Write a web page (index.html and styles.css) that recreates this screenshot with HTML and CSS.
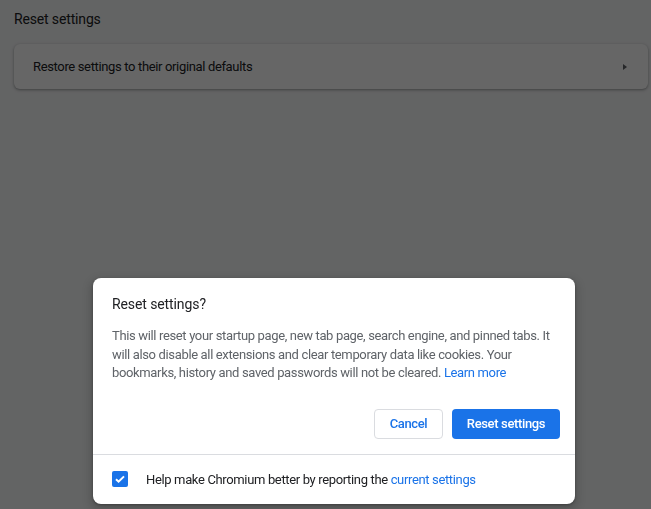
FILE: index.html
```html
<!DOCTYPE html>
<html>
<head>
<meta charset="utf-8">
<link rel="stylesheet" href="styles.css">
</head>
<body>
<main class="page">
  <h2 class="section-title">Reset settings</h2>
  <div class="card">
    <div class="row">
      <span class="row-label">Restore settings to their original defaults</span>
      <span class="subpage-arrow"></span>
    </div>
  </div>
</main>
<div class="scrim"></div>
<div class="dialog" role="dialog">
  <div class="dialog-title">Reset settings?</div>
  <div class="dialog-body">This will reset your startup page, new tab page, search engine, and pinned tabs. It will also disable all extensions and clear temporary data like cookies. Your bookmarks, history and saved passwords will not be cleared. <a class="link" href="#">Learn more</a></div>
  <div class="dialog-buttons">
    <button class="btn btn-cancel">Cancel</button>
    <button class="btn btn-action">Reset settings</button>
  </div>
  <div class="dialog-footer">
    <span class="checkbox"><svg viewBox="0 0 16 16" width="16" height="16"><path d="M4 8.2l2.6 2.5L12 5.4" fill="none" stroke="#fff" stroke-width="2"/></svg></span>
    <span class="footer-text">Help make Chromium better by reporting the <a class="link" href="#">current settings</a></span>
  </div>
</div>
</body>
</html>
```

FILE: styles.css
```css
html, body {
  margin: 0;
  padding: 0;
  height: 100%;
}
body {
  background: #f8f9fa;
  font-family: Roboto, "Liberation Sans", Arial, sans-serif;
  color: #202124;
  overflow: hidden;
  letter-spacing: -0.35px;
}
.page {
  padding: 9px 0 0 14px;
}
.section-title {
  margin: 0;
  font-size: 14px;
  font-weight: 400;
  line-height: 20px;
  color: #202124;
  letter-spacing: -0.15px;
}
.card {
  margin-top: 15px;
  width: 634px;
  background: #fff;
  border-radius: 6px;
  box-shadow: 0 1px 2px rgba(60,64,67,0.3), 0 1px 3px 1px rgba(60,64,67,0.15);
}
.row {
  height: 45px;
  display: flex;
  align-items: center;
  justify-content: space-between;
  padding: 0 21px 0 19px;
}
.row-label {
  font-size: 13px;
  color: #202124;
}
.subpage-arrow {
  width: 0;
  height: 0;
  border-top: 3.5px solid transparent;
  border-bottom: 3.5px solid transparent;
  border-left: 4px solid #5f6368;
}
.scrim {
  position: fixed;
  inset: 0;
  background: rgba(0,0,0,0.6);
}
.dialog {
  position: absolute;
  left: 93px;
  top: 278px;
  width: 482px;
  background: #fff;
  border-radius: 8px;
  box-shadow: 0 4px 8px 3px rgba(0,0,0,0.15), 0 1px 3px rgba(0,0,0,0.3);
  overflow: hidden;
}
.dialog-title {
  padding: 16px 20px 0 19px;
  font-size: 14px;
  line-height: 20px;
  color: #202124;
  letter-spacing: -0.1px;
}
.dialog-body {
  margin-top: 13px;
  padding: 0 20px 0 19px;
  font-size: 13px;
  line-height: 18.6px;
  color: #5f6368;
}
.link {
  color: #1a73e8;
  text-decoration: none;
}
.dialog-buttons {
  display: flex;
  justify-content: flex-end;
  gap: 9px;
  padding: 26px 15px 15px 0;
  border-bottom: 1px solid #dadce0;
}
.btn {
  height: 30px;
  border-radius: 4px;
  font-family: inherit;
  font-size: 13px;
  font-weight: 500;
  letter-spacing: -0.35px;
  padding: 0;
  margin: 0;
}
.btn-cancel {
  width: 69px;
  background: #fff;
  border: 1px solid #dadce0;
  color: #1a73e8;
}
.btn-action {
  width: 108px;
  background: #1a73e8;
  border: none;
  color: #fff;
}
.dialog-footer {
  height: 49px;
  display: flex;
  align-items: center;
  padding-left: 19px;
}
.checkbox {
  width: 16px;
  height: 16px;
  border-radius: 2px;
  background: #1a73e8;
  display: flex;
}
.footer-text {
  margin-left: 18px;
  font-size: 13px;
  color: #202124;
}
```
